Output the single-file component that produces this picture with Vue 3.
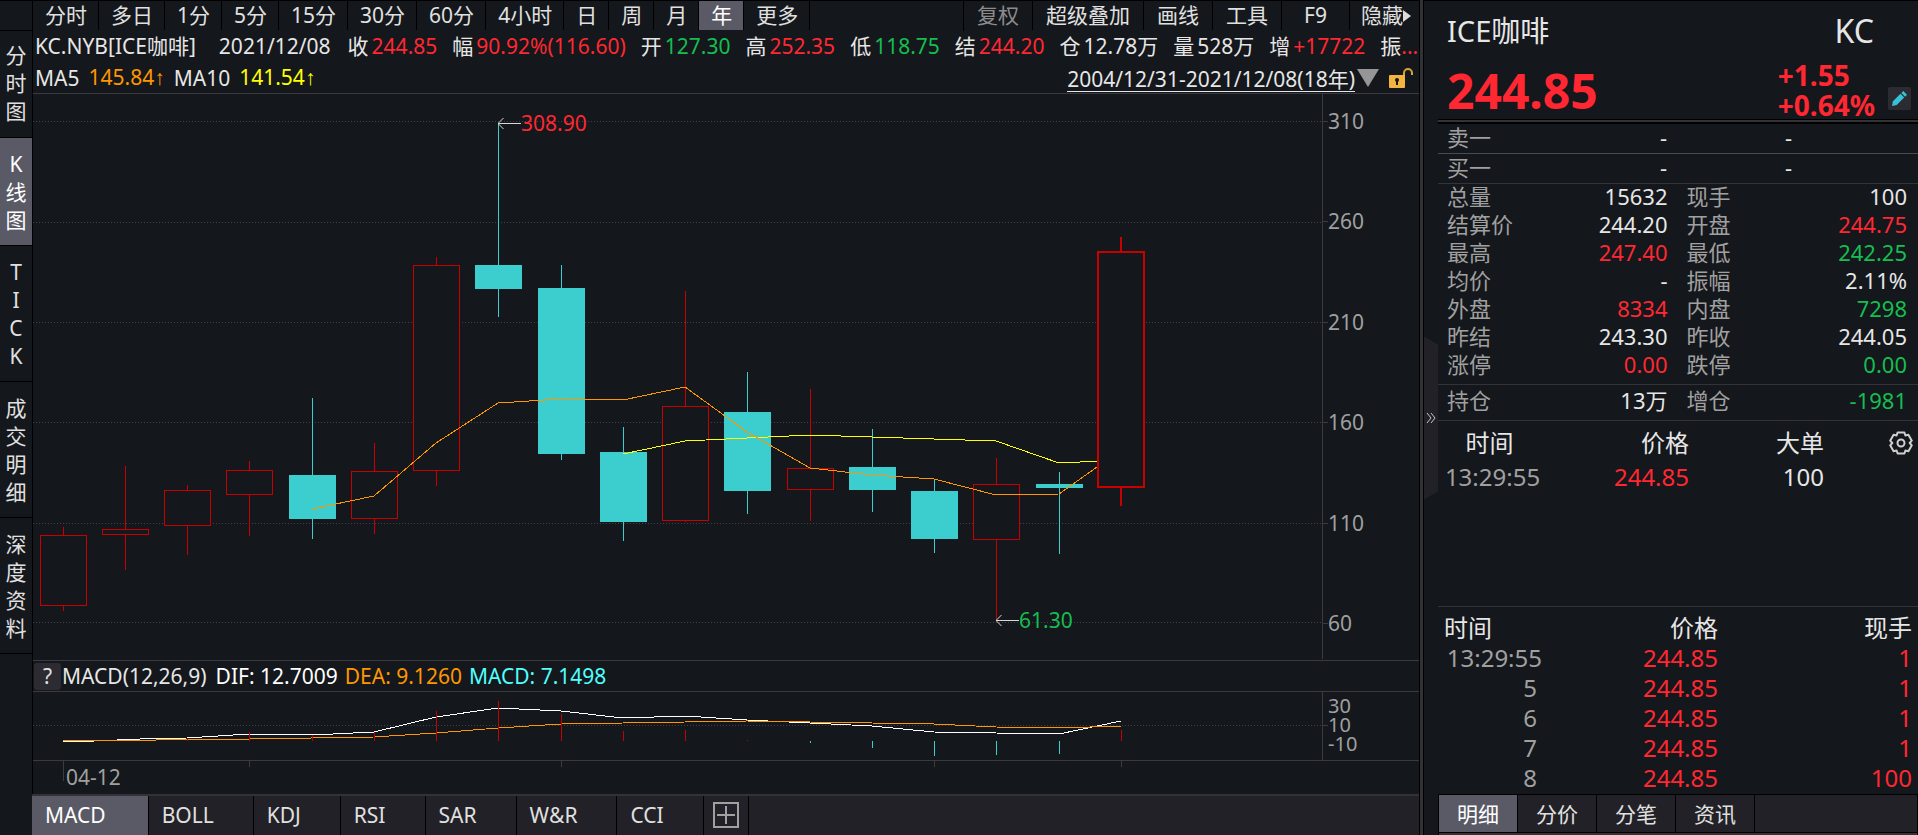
<script setup>
import { ref } from 'vue'

const sideTabs = ['分时图', 'K线图', 'TICK', '成交明细', '深度资料']
const activeSide = ref('K线图')

const periods = ['分时', '多日', '1分', '5分', '15分', '30分', '60分', '4小时', '日', '周', '月', '年', '更多']
const activePeriod = ref('年')
const tools = ['复权', '超级叠加', '画线', '工具', 'F9']

const readout = [
  { label: '收', value: '244.85', tone: 'up' },
  { label: '幅', value: '90.92%(116.60)', tone: 'up' },
  { label: '开', value: '127.30', tone: 'down' },
  { label: '高', value: '252.35', tone: 'up' },
  { label: '低', value: '118.75', tone: 'down' },
  { label: '结', value: '244.20', tone: 'up' },
  { label: '仓', value: '12.78万', tone: '' },
  { label: '量', value: '528万', tone: '' },
  { label: '增', value: '+17722', tone: 'up' },
]

// Plot canvas: origin and size shared by the candles, the averages and the MACD lines
const plot = { x: 33, y: 94, w: 1289, h: 566 }
const gridLines = [121, 222, 322, 422, 523, 622]
const priceTicks = [310, 260, 210, 160, 110, 60]

// x = centre of the candle, then high, body top, body bottom, low
const candles = [
  { x: 63, high: 527, top: 535, bottom: 606, low: 611, up: true },
  { x: 125, high: 466, top: 529, bottom: 535, low: 570, up: true },
  { x: 187, high: 485, top: 490, bottom: 526, low: 555, up: true },
  { x: 249, high: 461, top: 470, bottom: 495, low: 536, up: true },
  { x: 312, high: 398, top: 475, bottom: 519, low: 539, up: false },
  { x: 374, high: 443, top: 471, bottom: 519, low: 534, up: true },
  { x: 436, high: 257, top: 265, bottom: 471, low: 486, up: true },
  { x: 498, high: 124, top: 265, bottom: 289, low: 317, up: false },
  { x: 561, high: 265, top: 288, bottom: 454, low: 460, up: false },
  { x: 623, high: 427, top: 452, bottom: 522, low: 541, up: false },
  { x: 685, high: 291, top: 406, bottom: 521, low: 522, up: true },
  { x: 747, high: 372, top: 412, bottom: 491, low: 514, up: false },
  { x: 810, high: 389, top: 468, bottom: 490, low: 521, up: true },
  { x: 872, high: 429, top: 467, bottom: 490, low: 512, up: false },
  { x: 934, high: 480, top: 491, bottom: 539, low: 553, up: false },
  { x: 996, high: 458, top: 484, bottom: 540, low: 620, up: true },
  { x: 1059, high: 472, top: 484, bottom: 488, low: 554, up: false },
]
const ma5 = '312,509 374,496 436,443 498,403 561,399 623,400 685,387 747,432 810,468 872,475 934,479 996,495 1059,494 1121,450'
const ma10 = '623,454 685,441 747,438 810,435 872,437 934,439 996,441 1059,463 1121,460'

const pct = (value, whole) => `${(value / whole) * 100}%`
const marks = [
  { text: '308.90', tone: 'up', x: 498, y: 123 },
  { text: '61.30', tone: 'down', x: 996, y: 620 },
].map((m) => ({ ...m, left: pct(m.x - plot.x, plot.w), top: pct(m.y - plot.y, plot.h) }))

const macdBars = [
  { x: 187, to: 738 }, { x: 249, to: 732 }, { x: 312, to: 735 }, { x: 374, to: 732 },
  { x: 436, to: 711 }, { x: 498, to: 701 }, { x: 561, to: 714 }, { x: 623, to: 731 },
  { x: 685, to: 730 }, { x: 747, to: 740 }, { x: 810, to: 743 }, { x: 872, to: 748 },
  { x: 934, to: 756 }, { x: 996, to: 755 }, { x: 1059, to: 754 }, { x: 1121, to: 730 },
]
const dif = '63,741 94,741 140,739 187,738 249,734 312,735 374,732 436,717 498,708 561,711 623,718 685,716 747,720 810,723 872,726 934,732 996,733 1059,734 1121,721'
const dea = '63,741 156,740 249,739 374,737 436,733 498,728 561,724 623,723 685,722 747,721 810,722 872,723 934,724 996,727 1059,728 1121,726'
const dateTicks = [249, 561, 934, 1121]

const indicators = ['MACD', 'BOLL', 'KDJ', 'RSI', 'SAR', 'W&R', 'CCI']
const activeIndicator = ref('MACD')

const quotes = [
  ['总量', '15632', '', '现手', '100', ''],
  ['结算价', '244.20', '', '开盘', '244.75', 'up'],
  ['最高', '247.40', 'up', '最低', '242.25', 'down'],
  ['均价', '-', '', '振幅', '2.11%', ''],
  ['外盘', '8334', 'up', '内盘', '7298', 'down'],
  ['昨结', '243.30', '', '昨收', '244.05', ''],
  ['涨停', '0.00', 'up', '跌停', '0.00', 'down'],
]
const ticks = [
  { time: '13:29:55', price: '244.85', lots: 1 },
  { time: '5', price: '244.85', lots: 1 },
  { time: '6', price: '244.85', lots: 1 },
  { time: '7', price: '244.85', lots: 1 },
  { time: '8', price: '244.85', lots: 100 },
]
const detailTabs = ['明细', '分价', '分笔', '资讯']
const activeDetail = ref('明细')
</script>

<template>
  <div class="app">
    <main class="main">
      <nav class="toolbar">
        <div class="corner"></div>
        <button v-for="p in periods" :key="p" type="button" :class="{ active: p === activePeriod }" @click="activePeriod = p">{{ p }}</button>
        <div class="spacer"></div>
        <button v-for="(t, i) in tools" :key="t" type="button" class="tool" :class="{ muted: i === 0 }">{{ t }}</button>
        <button type="button" class="tool hide">隐藏<svg width="8" height="12" viewBox="0 0 8 12"><path d="M0 0L8 6L0 12Z" fill="#dcdcdc" /></svg></button>
      </nav>

      <div class="body">
        <nav class="side">
          <button v-for="s in sideTabs" :key="s" type="button" :class="{ active: s === activeSide }" @click="activeSide = s">
            <span v-for="(c, i) in s" :key="i">{{ c }}</span>
          </button>
        </nav>

        <section class="chart">
          <div class="readout">
            <span class="name">KC.NYB[ICE咖啡]</span>
            <span class="day">2021/12/08</span>
            <span v-for="r in readout" :key="r.label" class="pair">{{ r.label }}<b :class="r.tone">{{ r.value }}</b></span>
            <span class="pair tail">振<b class="up">...</b></span>
          </div>

          <div class="averages">
            <span>MA5</span><span class="orange">145.84<i>↑</i></span>
            <span>MA10</span><span class="yellow">141.54<i>↑</i></span>
            <a href="#" class="range">2004/12/31-2021/12/08(18年)</a>
            <svg class="caret" width="22" height="18" viewBox="0 0 22 18"><path d="M0 0H22L11 18Z" fill="#969696" /></svg>
            <svg class="lock" width="24" height="20" viewBox="0 0 24 20">
              <path d="M15 8V5A4 4 0 0 1 23 5V7" fill="none" stroke="#d9a32f" stroke-width="2" />
              <rect x="0" y="7" width="16" height="13" rx="1" fill="#f2b53f" />
              <circle cx="8" cy="12" r="2" fill="#14171b" /><rect x="7" y="12" width="2" height="5" fill="#14171b" />
            </svg>
          </div>

          <div class="price-row">
            <div class="plot">
              <svg class="canvas" :viewBox="`${plot.x} ${plot.y} ${plot.w} ${plot.h}`" preserveAspectRatio="none" shape-rendering="crispEdges">
                <line v-for="g in gridLines" :key="g" :x1="plot.x" :x2="plot.x + plot.w" :y1="g + 0.5" :y2="g + 0.5" class="grid" />
                <g v-for="c in candles" :key="c.x" :class="c.up ? 'rise' : 'fall'">
                  <line :x1="c.x + 0.5" :x2="c.x + 0.5" :y1="c.high" :y2="c.low" />
                  <rect :x="c.x - 22.5" :y="c.top + 0.5" width="46" :height="c.bottom - c.top - 1" />
                </g>
                <polyline :points="ma10" class="line yellow-line" />
                <polyline :points="ma5" class="line orange-line" />
                <g class="rise thick">
                  <line x1="1121" x2="1121" y1="237" y2="506" />
                  <rect x="1098" y="252" width="46" height="235" />
                </g>
              </svg>
              <div v-for="m in marks" :key="m.text" class="mark" :class="m.tone" :style="{ left: m.left, top: m.top }">
                <svg width="23" height="11" viewBox="0 0 23 11"><path d="M0 5.5H23M5.5 0L0 5.5L5.5 11" fill="none" stroke="#d8d8d8" /></svg>{{ m.text }}
              </div>
            </div>
            <div class="axis price-axis"><span v-for="t in priceTicks" :key="t">{{ t }}</span></div>
          </div>

          <div class="macd-head">
            <button type="button" class="help">?</button>
            <span class="formula">MACD(12,26,9)</span>
            <span class="white">DIF: 12.7009</span>
            <span class="orange">DEA: 9.1260</span>
            <span class="cyan">MACD: 7.1498</span>
          </div>

          <div class="macd-row">
            <svg class="macd-plot" :viewBox="`${plot.x} 692 ${plot.w} 68`" preserveAspectRatio="none" shape-rendering="crispEdges">
              <line :x1="plot.x" :x2="plot.x + plot.w" y1="725.5" y2="725.5" class="grid" />
              <polyline :points="dif" class="line white-line" />
              <polyline :points="dea" class="line orange-line" />
              <line v-for="b in macdBars" :key="b.x" :x1="b.x + 0.5" :x2="b.x + 0.5" y1="741" :y2="b.to" :class="b.to < 741 ? 'bar-up' : 'bar-down'" />
            </svg>
            <div class="axis macd-axis"><span>30</span><span class="tick">10</span><span>-10</span></div>
          </div>

          <div class="dates">
            <svg class="date-plot" :viewBox="`${plot.x} 761 ${plot.w} 33`" preserveAspectRatio="none" shape-rendering="crispEdges">
              <line x1="63.5" x2="63.5" y1="761" y2="781" />
              <line v-for="d in dateTicks" :key="d" :x1="d + 0.5" :x2="d + 0.5" y1="761" y2="767" />
            </svg>
            <span class="date">04-12</span>
          </div>
        </section>
      </div>

      <nav class="indicators">
        <div class="corner"></div>
        <div class="strip">
          <button v-for="n in indicators" :key="n" type="button" :class="{ active: n === activeIndicator }" @click="activeIndicator = n">{{ n }}</button>
          <button type="button" class="add" aria-label="添加指标">
            <svg width="26" height="26" viewBox="0 0 26 26" shape-rendering="crispEdges"><rect x="1" y="1" width="24" height="24" fill="none" stroke="#a0a0a0" stroke-width="2" /><path d="M13 4V22M4 13H22" stroke="#a0a0a0" stroke-width="2" /></svg>
          </button>
        </div>
      </nav>
    </main>

    <div class="splitter"></div>

    <aside class="panel">
      <button type="button" class="collapse" aria-label="收起">
        <svg width="10" height="10" viewBox="0 0 10 10"><path d="M1 0L5 5L1 10M5 0L9 5L5 10" fill="none" stroke="#c8c8c8" /></svg>
      </button>
      <div class="content">
        <header class="title"><span>ICE咖啡</span><span class="code">KC</span></header>
        <div class="last">
          <strong class="price">244.85</strong>
          <div class="change"><strong>+1.55</strong><strong>+0.64%</strong></div>
          <button type="button" class="edit" aria-label="编辑">
            <svg width="15" height="15" viewBox="0 0 16 16" fill="#36c3d8"><path d="M0 16L1 11L9 3L13 7L5 15Z" /><path d="M10 2L12 0L16 4L14 6Z" /></svg>
          </button>
        </div>
        <div class="rule"></div>
        <div class="book"><span>卖一</span><b>-</b><b>-</b></div>
        <div class="book second"><span>买一</span><b>-</b><b>-</b></div>
        <div class="quotes">
          <template v-for="q in quotes" :key="q[0]">
            <div class="cell"><span>{{ q[0] }}</span><b :class="q[2]">{{ q[1] }}</b></div>
            <div class="cell"><span>{{ q[3] }}</span><b :class="q[5]">{{ q[4] }}</b></div>
          </template>
        </div>
        <div class="quotes holding">
          <div class="cell"><span>持仓</span><b>13万</b></div>
          <div class="cell"><span>增仓</span><b class="down">-1981</b></div>
        </div>

        <div class="orders">
          <table class="big">
            <thead>
              <tr>
                <th class="b1">时间</th><th class="b2">价格</th><th class="b3">大单</th>
                <th><button type="button" class="gear" aria-label="设置">
                  <svg width="24" height="24" viewBox="0 0 24 24" fill="none" stroke="#d0d0d0" stroke-width="2"><path d="M8.6 1.5H15.4L16.4 4.5L19.4 3.8L22.8 9.7L20.7 12L22.8 14.3L19.4 20.2L16.4 19.5L15.4 22.5H8.6L7.6 19.5L4.6 20.2L1.2 14.3L3.3 12L1.2 9.7L4.6 3.8L7.6 4.5Z" stroke-linejoin="round" /><circle cx="12" cy="12" r="3.5" /></svg>
                </button></th>
              </tr>
            </thead>
            <tbody><tr><td class="b1 dim">13:29:55</td><td class="b2 up">244.85</td><td class="b3">100</td><td></td></tr></tbody>
          </table>
        </div>

        <table class="ticks">
          <thead><tr><th class="t1">时间</th><th class="t2">价格</th><th class="t3">现手</th></tr></thead>
          <tbody>
            <tr v-for="t in ticks" :key="t.time">
              <td class="t1 dim" :class="{ short: t.time.length < 3 }">{{ t.time }}</td><td class="t2 up">{{ t.price }}</td><td class="t3 up">{{ t.lots }}</td>
            </tr>
          </tbody>
        </table>

        <nav class="detail">
          <button v-for="d in detailTabs" :key="d" type="button" :class="{ active: d === activeDetail }" @click="activeDetail = d">{{ d }}</button>
        </nav>
      </div>
    </aside>
  </div>
</template>

<style>
body { background: #14171b; }
</style>

<style scoped>
.app {
  display: flex;
  height: 100vh;
  overflow: hidden;
  background: #14171b;
  color: #e6e6e6;
  font-family: "Noto Sans", "Noto Sans CJK SC", sans-serif;
  font-size: 21px;
  line-height: 28px;
  white-space: nowrap;
}
.app * { box-sizing: border-box; }
button {
  margin: 0;
  padding: 0;
  border: 0;
  border-radius: 0;
  background: none;
  color: #e0e0e0;
  font: inherit;
  cursor: pointer;
}
svg { display: block; flex: none; }
b { font-weight: 400; }
.up { color: #ff2832; }
.down { color: #14be50; }
.orange { color: #ff9600; }
.yellow { color: #ffff00; }
.cyan { color: #50ffff; }
.white { color: #ffffff; }
button.active { background: #5a5a66; color: #ffffff; }

.main { flex: 1; min-width: 0; display: flex; flex-direction: column; border-right: 1px solid #000; }
.corner { flex: none; width: 32px; }

.toolbar { display: flex; height: 31px; border-top: 1px solid #000; }
.toolbar .corner { width: 33px; border-right: 1px solid #000; border-bottom: 1px solid #000; }
.toolbar button { padding: 0 11px 0 12px; margin-bottom: 1px; border-right: 1px solid #000; line-height: 29px; }
.toolbar .spacer { flex: 1; border-right: 1px solid #000; }
.toolbar .tool { min-width: 68px; padding: 0 13px; }
.toolbar .hide { display: flex; align-items: center; padding: 0 8px 0 11px; border-right: 0; }
.toolbar .muted { color: #8c8c8c; }

.body { flex: 1; min-height: 0; display: flex; }
.side { flex: none; width: 33px; border-right: 1px solid #000; }
.side button { display: block; width: 100%; padding: 12px 0 11px; border-bottom: 1px solid #000; }
.side button:first-child { padding: 10px 0 12px; }
.side span { display: block; }

.chart { flex: 1; min-width: 0; display: flex; flex-direction: column; }
.readout { display: flex; height: 31px; gap: 15px; padding-left: 2px; line-height: 30px; overflow: hidden; }
.readout .name { margin-right: 8px; }
.readout .day { margin-right: 2px; }
.pair { display: flex; gap: 3px; }
.pair.tail { gap: 0; }
.averages { display: flex; align-items: center; height: 32px; gap: 9px; padding-left: 2px; border-bottom: 1px solid #3a3a3f; }
.averages i { font-family: "Liberation Sans", sans-serif; font-style: normal; }
.range { margin: 3px 0 0 auto; color: inherit; text-decoration: none; line-height: 24px; border-bottom: 1px solid #e6e6e6; }
.caret { margin-left: -7px; }
.lock { margin: 0 6px 0 1px; }

.price-row { flex: 1; min-height: 0; display: flex; }
.plot { position: relative; flex: 1; min-width: 0; }
.canvas { position: absolute; inset: 0; width: 100%; height: 100%; }
.grid { stroke: #3e4146; stroke-dasharray: 1 2; }
.rise line, .rise rect { stroke: #c80000; fill: #14171b; }
.fall line, .fall rect { stroke: #3ccece; fill: #3ccece; }
.thick line, .thick rect { stroke-width: 2; }
.line { fill: none; stroke-width: 1; }
.yellow-line { stroke: #ffff00; }
.orange-line { stroke: #ff9600; }
.white-line { stroke: #ffffff; }
.bar-up { stroke: #c80000; }
.bar-down { stroke: #3ccece; }
.mark { position: absolute; display: flex; align-items: center; transform: translateY(-50%); }
.axis { flex: none; display: flex; flex-direction: column; justify-content: space-between; width: 97px; padding-left: 5px; border-left: 1px solid #3a3a3f; color: #a0a0a0; }
.price-axis { padding-top: 13px; padding-bottom: 22px; margin-bottom: 1px; }
.price-axis span::before, .tick::before { content: ""; float: left; width: 5px; height: 1px; margin: 14px 0 0 -5px; background: #3a3a3f; }
.macd-axis { font-size: 20px; line-height: 18px; padding-top: 5px; padding-bottom: 7px; }
.tick::before { margin-top: 9px; }

.macd-head { display: flex; align-items: center; height: 32px; gap: 7px; padding-left: 1px; border-top: 1px solid #3a3a3f; border-bottom: 1px solid #3a3a3f; line-height: 26px; }
.macd-head span { margin-bottom: 1px; }
.formula { margin-right: 2px; }
.help { width: 27px; height: 27px; margin-right: -6px; border-radius: 3px; background: #2b2b31; }
.macd-row { display: flex; height: 68px; }
.macd-plot, .date-plot { flex: 1; min-width: 0; height: 100%; }
.dates { position: relative; height: 34px; border-top: 1px solid #3a3a3f; padding-right: 97px; display: flex; }
.date-plot line { stroke: #3a3a3f; }
.date { position: absolute; left: 33px; top: 2px; color: #a0a0a0; }

.indicators { display: flex; height: 41px; }
.strip { flex: 1; display: flex; background: #222127; border-top: 2px solid #333337; }
.strip button { padding: 0 39px 2px 13px; border-right: 1px solid #000; }
.strip .active { padding-right: 42px; }
.strip .add { padding: 0 9px 2px; }

.splitter { flex: none; width: 4px; background: #323236; border-right: 1px solid #000; }

.panel { flex: none; width: 494px; display: flex; align-items: center; border-top: 1px solid #000; font-size: 22px; }
.collapse { display: flex; align-items: center; justify-content: center; width: 14px; height: 163px; background: #222127; clip-path: polygon(0 0, 100% 8px, 100% 155px, 0 100%); }
.content { flex: 1; min-width: 0; align-self: stretch; display: flex; flex-direction: column; }
.title { display: flex; justify-content: space-between; height: 59px; padding: 9px 44px 0 9px; font-size: 29px; line-height: 42px; }
.code { font-size: 32px; }
.last { display: flex; height: 59px; padding: 0 7px 0 9px; color: #ff2832; }
.price { flex: 1; font-size: 48px; line-height: 61px; }
.change { font-size: 28px; line-height: 30px; display: flex; flex-direction: column; }
.edit { width: 23px; height: 23px; margin: 27px 0 0 13px; padding: 4px; border-radius: 2px; background: #2b2b31; }
.rule { height: 5px; background: #333337; border-top: 1px solid #000; border-bottom: 2px solid #000; }
.book { display: grid; grid-template-columns: 100px 1fr 125px; height: 30px; padding: 0 126px 0 9px; line-height: 27px; border-bottom: 1px solid #4a4a4f; }
.book.second { border-bottom-color: #333337; }
.book b { text-align: right; }
.book span, .cell span { color: #a0a0a0; }
.quotes { display: grid; grid-template-columns: 1fr 1fr; column-gap: 19px; padding: 0 11px 4px 9px; border-bottom: 1px solid #333337; }
.cell { display: flex; justify-content: space-between; height: 28px; line-height: 24px; }
.holding { padding: 3px 11px 5px 9px; }
.holding .cell { height: 27px; }

.orders { flex: 1; border-bottom: 1px solid #333337; padding-top: 5px; }
table { width: 100%; border-collapse: collapse; table-layout: fixed; font-size: 24px; }
th, td { padding: 0; font-weight: 400; text-align: right; height: 30px; line-height: 30px; }
.big th, .big td { height: 34px; line-height: 34px; }
.big th:last-child { padding-right: 5px; }
.big .b1 { width: 103px; text-align: center; }
.big td.b1 { padding-left: 6px; }
.big .b2 { width: 148px; }
.big .b3 { width: 135px; }
.gear { float: right; }
.dim { color: #a0a0a0; }
.ticks { margin: 6px 0 1px; }
.ticks .t1 { width: 104px; }
.ticks th.t1 { text-align: left; padding-left: 6px; }
.ticks .short { padding-right: 5px; }
.ticks .t2 { width: 176px; }
.ticks .t3 { padding-right: 6px; }
.detail { display: flex; height: 41px; border: 1px solid #000; border-bottom: 0; background: #222127; box-shadow: inset 0 -2px #333337, inset 0 -3px #000; }
.detail button { width: 79px; margin-bottom: 3px; border-right: 1px solid #000; font-size: 21px; }
</style>
